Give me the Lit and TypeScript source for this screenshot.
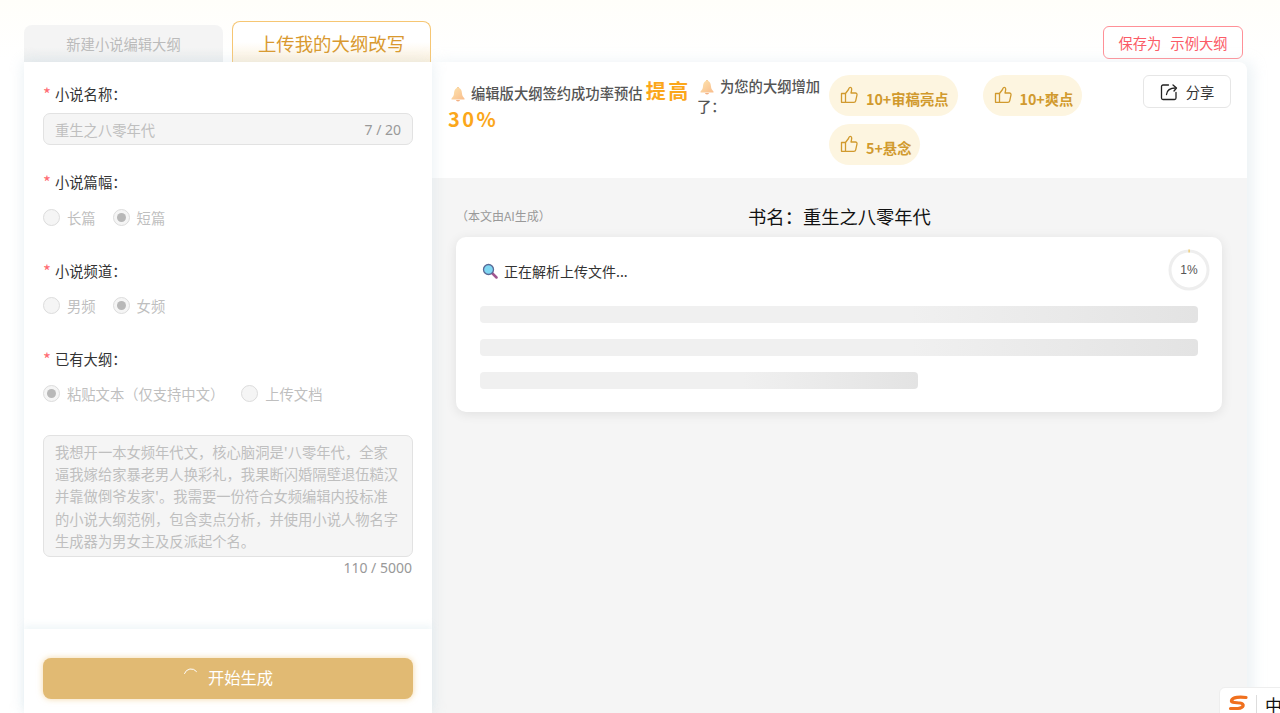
import { html, css, LitElement, svg } from 'lit';
import { customElement } from 'lit/decorators.js';

const bell = html`<svg class="bell" viewBox="0 0 16 16" width="16" height="16">
  <defs>
    <linearGradient id="bg" x1="0" y1="0" x2="1" y2="1">
      <stop offset="0" stop-color="#fde3ae" />
      <stop offset="1" stop-color="#f9bd8c" />
    </linearGradient>
  </defs>
  <circle cx="8" cy="2.200" r="1.200" fill="#f7c98f" />
  <path d="M8 2C5 2 4.200 4.500 4 7.500 3.900 9.500 3 11 1.500 12.500v1h13v-1C13 11 12.100 9.500 12 7.500 11.800 4.500 11 2 8 2Z" fill="url(#bg)" />
  <path d="M6 14h4a2 1.400 0 0 1-4 0Z" fill="#f3b184" />
</svg>`;

const thumb = html`<svg class="thumb" viewBox="0 0 18 18" width="18" height="18" fill="none" stroke="#d19a2e" stroke-width="1.300" stroke-linejoin="round">
  <path d="M5.500 7.500 8.500 3.500C8.800 2 10 1.200 10.800 1.500 11.800 1.900 11.800 3.500 11.500 4.800L11 7h4.500c1 0 1.700.9 1.500 1.800l-1.300 6c-.2.9-.9 1.500-1.800 1.500H5.500Z" />
  <path d="M5.500 7.500H1.500v8.800h4" />
</svg>`;

@customElement('save-tabs')
export class SaveTabs extends LitElement {
  static styles = css`
    :host {
      display: flex;
      height: 62px;
      align-items: flex-end;
      padding-left: 24px;
      padding-right: 37px;
      font-family: 'Noto Sans CJK SC', sans-serif;
    }
    .tab {
      width: 199px;
      box-sizing: border-box;
      text-align: center;
      border-radius: 8px 8px 0 0;
    }
    .idle {
      height: 37px;
      line-height: 38px;
      font-size: 14.300px;
      color: #bbb;
      background: linear-gradient(#f4f4f4 60%, #eceeef);
    }
    .active {
      height: 41px;
      margin-left: 9px;
      line-height: 42px;
      font-size: 18.400px;
      color: #d9992f;
      border: 1px solid #f6c673;
      border-bottom: none;
      background: linear-gradient(#fff 50%, #fdf1dc);
    }
    .save {
      margin-left: auto;
      align-self: flex-start;
      margin-top: 26px;
      width: 140px;
      height: 33px;
      box-sizing: border-box;
      border: 1px solid #ff9097;
      border-radius: 6px;
      background: #fff;
      color: #fb5c67;
      font-size: 14.300px;
      display: flex;
      align-items: center;
      justify-content: center;
      gap: 9px;
    }
  `;

  render() {
    return html`
      <div class="tab idle">新建小说编辑大纲</div>
      <div class="tab active">上传我的大纲改写</div>
      <div class="save"><span>保存为</span><span>示例大纲</span></div>
    `;
  }
}

@customElement('outline-form')
export class OutlineForm extends LitElement {
  static styles = css`
    :host {
      display: flex;
      flex-direction: column;
      width: 408px;
      height: 651px;
      flex: none;
      background: #fff;
      box-shadow: 0 0 14px rgba(200, 218, 226, 0.45);
      position: relative;
      font-family: 'Noto Sans CJK SC', sans-serif;
    }
    .body {
      flex: 1;
      padding: 21px 19px 0;
    }
    .item {
      height: 88.330px;
    }
    .label {
      font-size: 14.300px;
      line-height: 22px;
      color: #333;
      display: flex;
      align-items: center;
    }
    .label i {
      font-style: normal;
      color: #ff6b72;
      width: 12px;
      font-size: 17px;
      line-height: 22px;
    }
    .input {
      margin-top: 8px;
      height: 32px;
      box-sizing: border-box;
      display: flex;
      justify-content: space-between;
      align-items: center;
      padding: 0 11px;
      background: #f5f5f5;
      border: 1px solid #e2e2e2;
      border-radius: 7px;
      font-size: 14.300px;
      color: #bfbfbf;
    }
    .input span:last-child {
      color: #999;
      font-size: 14px;
      font-family: 'Noto Sans', sans-serif;
    }
    .radios {
      display: flex;
      gap: 17px;
      margin-top: 13px;
      height: 22px;
      align-items: center;
      font-size: 14.300px;
      color: #bfbfbf;
    }
    .radio {
      display: flex;
      align-items: center;
      gap: 7px;
    }
    .radio b {
      width: 17px;
      height: 17px;
      box-sizing: border-box;
      border: 1px solid #dcdcdc;
      border-radius: 50%;
      background: #f5f5f5;
      display: flex;
      align-items: center;
      justify-content: center;
    }
    .radio.on b::after {
      content: '';
      width: 9px;
      height: 9px;
      border-radius: 50%;
      background: #b8b8b8;
    }
    .area {
      box-sizing: border-box;
      height: 122px;
      margin-top: -1.300px;
      padding: 5px 12px 0 11px;
      background: #f5f5f5;
      border: 1px solid #e2e2e2;
      border-radius: 7px;
      font-size: 14.300px;
      line-height: 22.200px;
      color: #bfbfbf;
    }
    .count {
      text-align: right;
      font-size: 14px;
      line-height: 22px;
      color: #999;
      padding-right: 1px;
      font-family: 'Noto Sans', sans-serif;
    }
    .foot {
      height: 84px;
      flex: none;
      box-sizing: border-box;
      padding: 29px 19px 0;
      box-shadow: 0 -4px 6px rgba(215, 232, 238, 0.35);
    }
    .go {
      height: 41px;
      border-radius: 8px;
      background: #e1ba73;
      box-shadow: 0 0 6px rgba(236, 190, 110, 0.6);
      color: #fff;
      font-size: 16.300px;
      line-height: 39px;
      display: flex;
      align-items: flex-start;
      justify-content: center;
      gap: 9px;
    }
    .go svg {
      margin-top: 9px;
    }
  `;

  private radio(text: string, on = false) {
    return html`<div class="radio ${on ? 'on' : ''}"><b></b>${text}</div>`;
  }

  render() {
    return html`
      <div class="body">
        <div class="item">
          <div class="label"><i>*</i>小说名称：</div>
          <div class="input"><span>重生之八零年代</span><span>7 / 20</span></div>
        </div>
        <div class="item">
          <div class="label"><i>*</i>小说篇幅：</div>
          <div class="radios">${this.radio('长篇')}${this.radio('短篇', true)}</div>
        </div>
        <div class="item">
          <div class="label"><i>*</i>小说频道：</div>
          <div class="radios">${this.radio('男频')}${this.radio('女频', true)}</div>
        </div>
        <div class="item">
          <div class="label"><i>*</i>已有大纲：</div>
          <div class="radios">${this.radio('粘贴文本（仅支持中文）', true)}${this.radio('上传文档')}</div>
        </div>
        <div class="area">我想开一本女频年代文，核心脑洞是'八零年代，全家逼我嫁给家暴老男人换彩礼，我果断闪婚隔壁退伍糙汉并靠做倒爷发家'。我需要一份符合女频编辑内投标准的小说大纲范例，包含卖点分析，并使用小说人物名字生成器为男女主及反派起个名。</div>
        <div class="count">110 / 5000</div>
      </div>
      <div class="foot">
        <div class="go">
          <svg viewBox="0 0 16 16" width="16" height="16" fill="none" stroke="#fff" stroke-width="1" stroke-linecap="round"><path d="M1.500 6.500A7 7 0 0 1 13.500 4.500" /></svg>
          开始生成
        </div>
      </div>
    `;
  }
}

@customElement('result-pane')
export class ResultPane extends LitElement {
  static styles = css`
    :host {
      display: flex;
      flex-direction: column;
      width: 815px;
      height: 651px;
      flex: none;
      background: #f5f5f5;
      border-radius: 0 8px 0 0;
      box-shadow: 6px 0 14px rgba(200, 218, 226, 0.35);
      font-family: 'Noto Sans CJK SC', sans-serif;
    }
    .head {
      height: 116px;
      flex: none;
      box-sizing: border-box;
      background: #fff;
      border-radius: 0 8px 0 0;
      padding: 13px 16px 0;
      display: flex;
    }
    .rate {
      width: 249px;
      flex: none;
      padding-top: 3px;
      font-size: 14.300px;
      font-weight: 500;
      line-height: 26px;
      color: #555;
    }
    .rate em {
      font-style: normal;
      font-weight: 700;
      font-size: 20px;
      letter-spacing: 2.500px;
      color: #fba71b;
    }
    .bell {
      vertical-align: -3px;
      margin: 0 5px 0 2px;
    }
    .more {
      width: 132px;
      flex: none;
      padding-top: 1px;
      font-size: 14.300px;
      font-weight: 500;
      line-height: 20px;
      color: #555;
    }
    .chips {
      width: 290px;
      flex: none;
      display: flex;
      flex-wrap: wrap;
      align-content: flex-start;
      column-gap: 25px;
      row-gap: 8px;
    }
    .chip {
      height: 41px;
      padding: 0 9px 0 11px;
      display: flex;
      align-items: center;
      gap: 8px;
      background: #fdf5e0;
      border-radius: 21px;
      color: #d19a2e;
      font-size: 14.300px;
      font-weight: 700;
    }
    .chip span {
      margin-top: 5px;
    }
    .chip svg {
      margin-top: -2px;
    }
    .share {
      margin-left: auto;
      width: 88px;
      height: 33px;
      box-sizing: border-box;
      border: 1px solid #e6e6e6;
      border-radius: 6px;
      display: flex;
      align-items: center;
      justify-content: center;
      gap: 8px;
      font-size: 14.300px;
      color: #333;
    }
    .title {
      height: 59px;
      flex: none;
      position: relative;
      display: flex;
      align-items: center;
      justify-content: center;
      font-size: 18.300px;
      color: #111;
      padding-top: 16px;
      box-sizing: border-box;
    }
    .title small {
      position: absolute;
      left: 24px;
      top: 29px;
      font-size: 12px;
      line-height: 18px;
      color: #999;
    }
    .card {
      margin: 0 25px 0 24px;
      height: 175px;
      box-sizing: border-box;
      padding: 23px 24px 0;
      background: #fff;
      border-radius: 10px;
      box-shadow: 0 2px 12px rgba(0, 0, 0, 0.09);
      position: relative;
    }
    .status {
      display: flex;
      align-items: center;
      gap: 6px;
      height: 22px;
      padding-left: 2px;
      font-size: 14px;
      color: #333;
    }
    .ring {
      position: absolute;
      right: 12px;
      top: 12px;
      width: 42px;
      height: 42px;
    }
    .ring span {
      position: absolute;
      inset: 0;
      display: flex;
      align-items: center;
      justify-content: center;
      font-size: 12px;
      color: #555;
      font-family: 'Liberation Sans', sans-serif;
    }
    .bar {
      height: 17px;
      margin-bottom: 16px;
      border-radius: 4px;
      background: linear-gradient(90deg, #f0f0f0 60%, #e3e3e3);
    }
    .bars {
      margin-top: 24px;
    }
  `;

  render() {
    const chips = ['10+审稿亮点', '10+爽点', '5+悬念'];
    return html`
      <div class="head">
        <div class="rate">${bell}编辑版大纲签约成功率预估 <em>提高 30%</em></div>
        <div class="more">${bell}为您的大纲增加了：</div>
        <div class="chips">
          ${chips.map(c => html`<div class="chip">${thumb}<span>${c}</span></div>`)}
        </div>
        <div class="share">
          <svg viewBox="0 0 18 18" width="18" height="18" fill="none" stroke="#222" stroke-width="1.300" stroke-linecap="round" stroke-linejoin="round">
            <path d="M8.500 2H3a1.500 1.500 0 0 0-1.500 1.500V15A1.500 1.500 0 0 0 3 16.500h11.500A1.500 1.500 0 0 0 16 15V9.500" />
            <path d="M6.500 11.500C7 7.500 10 5 15.500 5" />
            <path d="M13 2l3.500 3-2.500 3" />
          </svg>
          分享
        </div>
      </div>
      <div class="title"><small>（本文由AI生成）</small>书名：重生之八零年代</div>
      <div class="card">
        <div class="status">
          <svg viewBox="0 0 16 16" width="16" height="16">
            <path d="M10 10l4.500 4.500" stroke="#a0568f" stroke-width="2.500" stroke-linecap="round" />
            <circle cx="6.500" cy="6.500" r="5" fill="#7fd6f2" stroke="#5a6a96" stroke-width="1.300" />
          </svg>
          正在解析上传文件...
        </div>
        <div class="bars">
          <div class="bar"></div>
          <div class="bar"></div>
          <div class="bar" style="width: 61%"></div>
        </div>
        <div class="ring">
          <svg viewBox="0 0 42 42" width="42" height="42" fill="none" stroke-width="3">
            ${svg`<circle cx="21" cy="21" r="19" stroke="#eeeeee" />
            <path d="M20.500 2h1.200" stroke="#f0c458" />`}
          </svg>
          <span>1%</span>
        </div>
      </div>
    `;
  }
}

@customElement('app-root')
export class AppRoot extends LitElement {
  static styles = css`
    :host {
      display: block;
      height: 713px;
      overflow: hidden;
      position: relative;
      background: linear-gradient(#fffefa, #fff 60px);
    }
    .main {
      display: flex;
      padding-left: 24px;
    }
    .ime {
      position: absolute;
      left: 1219px;
      top: 687px;
      width: 70px;
      height: 40px;
      box-sizing: border-box;
      background: #fff;
      border: 1px solid #eee;
      border-radius: 6px 0 0 0;
      display: flex;
      align-items: flex-start;
      padding: 7px 0 0 8px;
      font-family: 'Noto Sans CJK SC', sans-serif;
      font-size: 17px;
      line-height: 20px;
      color: #111;
    }
    .ime svg {
      margin-right: 8px;
    }
    .ime u {
      width: 1px;
      height: 18px;
      background: #ddd;
      margin-right: 8px;
    }
  `;

  render() {
    return html`
      <save-tabs></save-tabs>
      <div class="main">
        <outline-form></outline-form>
        <result-pane></result-pane>
      </div>
      <div class="ime">
        <svg viewBox="0 0 20 16" width="20" height="16" fill="none" stroke="#f0701e" stroke-width="3.200" stroke-linecap="round">
          <path d="M18 2.500C12 1.500 4.500 2 3.500 5.500 3 8 8 7.500 12 8 17 8.700 16 13 10 13.500L2.500 13.500" />
        </svg>
        <u></u>中
      </div>
    `;
  }
}
